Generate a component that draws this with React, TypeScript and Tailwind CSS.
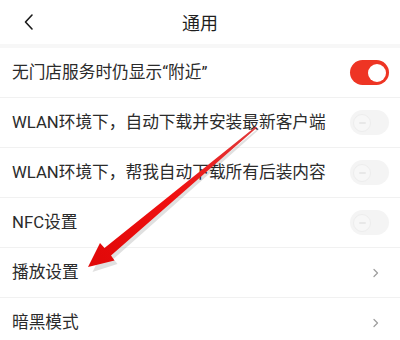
import React from "react";

const font = { fontFamily: "Roboto, 'Noto Sans CJK SC', sans-serif" };

function ToggleOn() {
  return (
    <div className="w-[39px] h-[25px] rounded-full bg-[#ee3524] flex items-center justify-end pr-[3px]">
      <div className="w-[18px] h-[18px] rounded-full bg-white" />
    </div>
  );
}

function ToggleOff() {
  return (
    <div className="w-[39px] h-[25px] rounded-full bg-[#f4f4f4] flex items-center justify-start pl-[3px]">
      <div className="w-[18px] h-[18px] rounded-full bg-[#f7f7f7] border border-[#ededed] flex items-center justify-center">
        <div className="w-[7px] h-[2px] rounded bg-[#e8e8e8]" />
      </div>
    </div>
  );
}

function Chevron() {
  return (
    <svg width="6" height="10" viewBox="0 0 6 10" className="mr-[10px]">
      <path d="M1 1.5 L4.5 5 L1 8.5" fill="none" stroke="#a0a0a0" strokeWidth="1.3" strokeLinecap="round" strokeLinejoin="round" />
    </svg>
  );
}

function Row({ label, right }: { label: string; right: React.ReactNode }) {
  return (
    <div className="h-[50px] flex items-center justify-between pl-[12px] pr-[11px] border-b border-[#f1f1f1]">
      <span className="text-[16.7px] text-[#2b2b2b] whitespace-nowrap">{label}</span>
      {right}
    </div>
  );
}

export default function App() {
  return (
    <div className="relative w-[400px] h-[340px] bg-white overflow-hidden" style={font}>
      <div className="relative h-[44px] flex items-center justify-center pt-[3px]">
        <svg width="14" height="18" viewBox="0 0 14 18" className="absolute left-[22px] top-[13px]">
          <path d="M10 2 L3.5 9 L10 16" fill="none" stroke="#1a1a1a" strokeWidth="1.6" strokeLinecap="round" strokeLinejoin="round" />
        </svg>
        <span className="text-[18px] text-[#1f1f1f]">通用</span>
      </div>
      <div className="h-[4px] bg-[#f7f7f7]" />
      <Row label="无门店服务时仍显示“附近”" right={<ToggleOn />} />
      <Row label="WLAN环境下，自动下载并安装最新客户端" right={<ToggleOff />} />
      <Row label="WLAN环境下，帮我自动下载所有后装内容" right={<ToggleOff />} />
      <Row label="NFC设置" right={<ToggleOff />} />
      <Row label="播放设置" right={<Chevron />} />
      <Row label="暗黑模式" right={<Chevron />} />
      <svg className="absolute inset-0 pointer-events-none" width="400" height="340" viewBox="0 0 400 340">
        <defs>
          <linearGradient id="ag" x1="256" y1="127" x2="90" y2="266" gradientUnits="userSpaceOnUse">
            <stop offset="0" stopColor="#e03a3a" />
            <stop offset="0.5" stopColor="#f01010" />
            <stop offset="1" stopColor="#e00808" />
          </linearGradient>
        </defs>
        <polygon
          points="257,128 112,257 116,262 91,270 103,246 106,250 256,127"
          fill="#000"
          opacity="0.12"
          transform="translate(1.5,2)"
        />
        <polygon
          points="257,127.5 111,255.5 114.5,260.5 88,267 100,243 104.5,248 255.5,126.8"
          fill="url(#ag)"
        />
      </svg>
    </div>
  );
}
